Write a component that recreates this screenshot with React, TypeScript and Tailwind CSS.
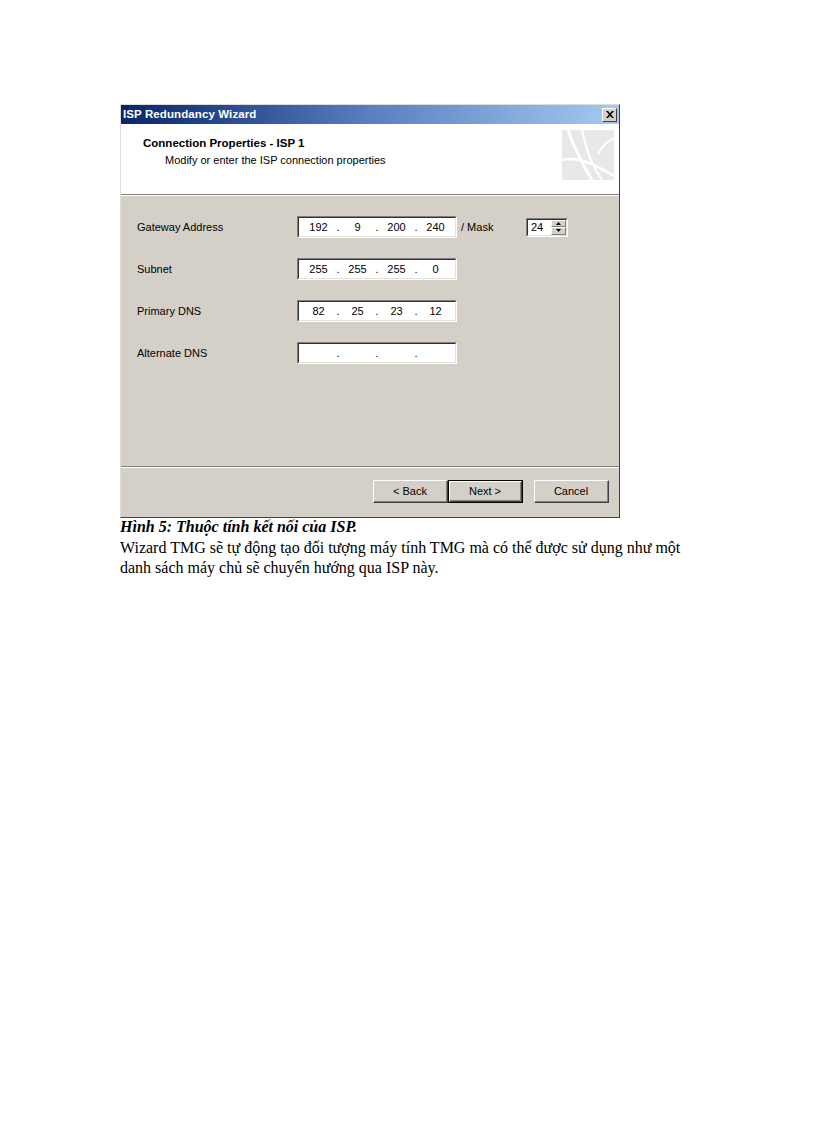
import React from "react";

const sunken =
  "border-t border-l border-t-[#808080] border-l-[#808080] border-b border-r border-b-white border-r-white";
const sunkenInner =
  "border-t border-l border-t-[#303030] border-l-[#303030] border-b border-r border-b-[#e4e2dc] border-r-[#e4e2dc]";

function IpField({ parts }: { parts: string[] }) {
  return (
    <div className={`w-[160px] h-[22px] ${sunken}`}>
      <div className={`h-full bg-white flex items-center pl-[4px] ${sunkenInner}`}>
        {parts.map((p, i) => (
          <React.Fragment key={i}>
            <span className="w-[31px] text-center">{p}</span>
            {i < 3 && <span className="w-[8px] text-center">.</span>}
          </React.Fragment>
        ))}
      </div>
    </div>
  );
}

function Row({ label, parts, children }: { label: string; parts: string[]; children?: React.ReactNode }) {
  return (
    <div className="flex items-center h-[22px]">
      <span className="w-[160px] shrink-0">{label}</span>
      <IpField parts={parts} />
      {children}
    </div>
  );
}

function WinButton({ label, isDefault }: { label: string; isDefault?: boolean }) {
  return (
    <div className={`w-[75px] h-[23px] ${isDefault ? "border border-black" : ""}`}>
      <div className="h-full flex items-center justify-center border-t border-l border-t-white border-l-white border-b border-r border-b-[#404040] border-r-[#404040]">
        <div className="w-full h-full flex items-center justify-center border-b border-r border-b-[#808080] border-r-[#808080]">
          {label}
        </div>
      </div>
    </div>
  );
}

export default function App() {
  return (
    <div className="min-h-[1123px] bg-white pt-[104px] pl-[120px]">
      {/* Dialog */}
      <div
        className="w-[500px] border-l border-t border-l-[#dcdcdc] border-t-[#dcdcdc] border-r border-b border-r-[#404040] border-b-[#404040] bg-[#d4d0c8] text-black text-[11px]"
        style={{ fontFamily: "'Liberation Sans', Arial, sans-serif" }}
      >
        {/* Title bar */}
        <div className="h-[19px] flex items-center justify-between pl-[2px] pr-[2px] bg-gradient-to-r from-[#0a246a] via-[#5a7fc0] to-[#a6caf0]">
          <span className="text-white font-bold text-[11.5px] tracking-[0.1px]">ISP Redundancy Wizard</span>
          <div className="w-[15px] h-[14px] bg-[#d4d0c8] flex items-center justify-center border-t border-l border-t-white border-l-white border-b border-r border-b-[#404040] border-r-[#404040]">
            <svg width="8" height="7" viewBox="0 0 8 7">
              <path d="M0 0L2 0L4 2.2L6 0L8 0L5 3.5L8 7L6 7L4 4.8L2 7L0 7L3 3.5Z" fill="#000" />
            </svg>
          </div>
        </div>

        {/* Header */}
        <div className="h-[70px] bg-white flex justify-between pl-[22px] pr-[5px] pt-[11px]">
          <div>
            <div className="font-bold text-[11.5px]">Connection Properties - ISP 1</div>
            <div className="pl-[22px]">Modify or enter the ISP connection properties</div>
          </div>
          <svg width="52" height="50" viewBox="0 0 52 50" className="mt-[-5px]">
            <rect x="0" y="0" width="52" height="50" fill="#e8e7ea" />
            <path d="M6 0 C12 18 18 30 30 50" stroke="#fff" strokeWidth="3" fill="none" />
            <path d="M20 0 C24 20 30 36 40 50" stroke="#fff" strokeWidth="2" fill="none" />
            <path d="M0 30 C16 26 32 34 52 46" stroke="#fff" strokeWidth="2.5" fill="none" />
            <path d="M52 8 C44 12 40 16 36 24" stroke="#fff" strokeWidth="2" fill="none" />
          </svg>
        </div>
        <div className="h-px bg-[#808080]" />
        <div className="h-px bg-white" />

        {/* Body */}
        <div className="h-[270px] pl-[16px] pt-[20px] flex flex-col gap-[20px]">
          <Row label="Gateway Address" parts={["192", "9", "200", "240"]}>
            <span className="ml-[4px] w-[65px]">/ Mask</span>
            <div className={`w-[42px] h-[19px] ${sunken}`}>
              <div className={`h-full bg-white flex items-center justify-between pl-[3px] ${sunkenInner}`}>
                <span>24</span>
                <div className="w-[15px] h-full flex flex-col">
                  <div className="flex-1 bg-[#d4d0c8] flex items-center justify-center border-t border-l border-t-white border-l-white border-b border-r border-b-[#808080] border-r-[#808080]">
                    <svg width="5" height="3" viewBox="0 0 5 3"><path d="M2.5 0L5 3H0Z" fill="#000" /></svg>
                  </div>
                  <div className="flex-1 bg-[#d4d0c8] flex items-center justify-center border-t border-l border-t-white border-l-white border-b border-r border-b-[#808080] border-r-[#808080]">
                    <svg width="5" height="3" viewBox="0 0 5 3"><path d="M0 0H5L2.5 3Z" fill="#000" /></svg>
                  </div>
                </div>
              </div>
            </div>
          </Row>
          <Row label="Subnet" parts={["255", "255", "255", "0"]} />
          <Row label="Primary DNS" parts={["82", "25", "23", "12"]} />
          <Row label="Alternate DNS" parts={["", "", "", ""]} />
        </div>
        <div className="h-px bg-[#808080]" />
        <div className="h-px bg-white" />

        {/* Footer */}
        <div className="h-[49px] flex items-start pt-[12px] pl-[252px]">
          <WinButton label="< Back" />
          <WinButton label="Next >" isDefault />
          <div className="w-[11px]" />
          <WinButton label="Cancel" />
        </div>
      </div>

      {/* Caption */}
      <div
        className="text-[16px] leading-[20.5px] text-black w-[600px] -mt-[1px]"
        style={{ fontFamily: "'Liberation Serif', 'Times New Roman', serif" }}
      >
        <div className="font-bold italic">Hình 5: Thuộc tính kết nối của ISP.</div>
        <div>Wizard TMG sẽ tự động tạo đối tượng máy tính TMG mà có thể được sử dụng như một</div>
        <div>danh sách máy chủ sẽ chuyển hướng qua ISP này.</div>
      </div>
    </div>
  );
}
